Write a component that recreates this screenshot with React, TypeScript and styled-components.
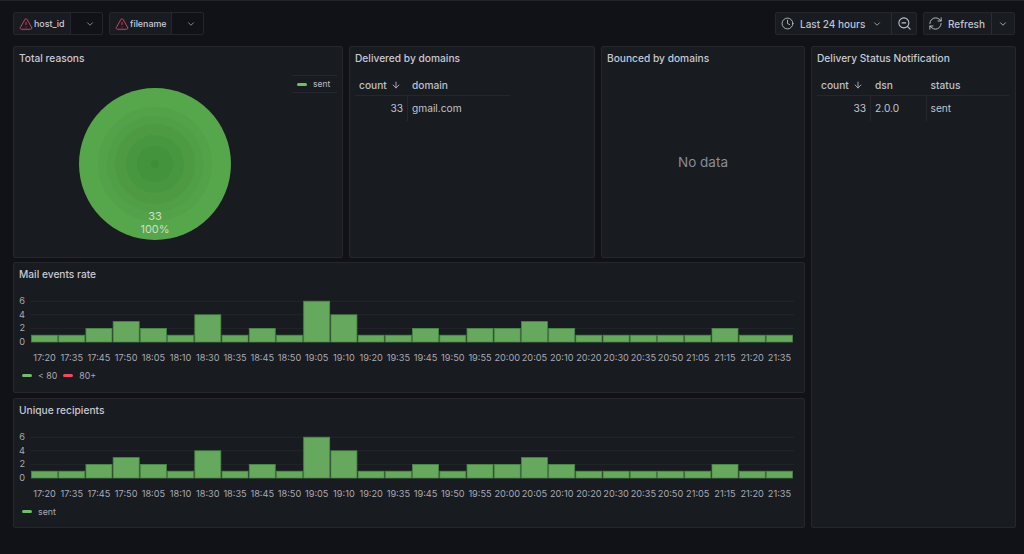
import React from 'react';
import styled, { createGlobalStyle } from 'styled-components';
import { ArrowDown, ChevronDown, Clock, RefreshCw, TriangleAlert, ZoomOut } from 'lucide-react';

const LABELS = ['17:20','17:35','17:45','17:50','18:05','18:10','18:30','18:35','18:45','18:50','19:05','19:10','19:20','19:35','19:45','19:50','19:55','20:00','20:05','20:10','20:20','20:30','20:35','20:50','21:05','21:15','21:20','21:35'];
const VALUES = [1,1,2,3,2,1,4,1,2,1,6,4,1,1,2,1,2,2,3,2,1,1,1,1,1,2,1,1];

const GlobalStyle = createGlobalStyle`
	html, body {
		margin: 0;
		padding: 0;
		background: #111217;
	}
	* {
		box-sizing: border-box;
	}
`;

const Page = styled.div`
	width: 1024px;
	height: 554px;
	overflow: hidden;
	padding: 12px 9px 0 13px;
	background: #111217;
	border-top: 1px solid #22242a;
	color: #ccccdc;
	font-family: Inter, "Noto Sans", sans-serif;
`;

const Toolbar = styled.div`
	display: flex;
	align-items: center;
	height: 23px;
	margin-top: -1px;
	gap: 6px;
`;

const Spacer = styled.div`
	flex: 1;
`;

const VarGroup = styled.div<{ $label: number; $total: number }>`
	display: grid;
	grid-template-columns: ${p => p.$label}px 1fr;
	width: ${p => p.$total}px;
	height: 23px;
	border: 1px solid #24262b;
	border-radius: 2px;
`;

const VarLabel = styled.div`
	display: flex;
	align-items: center;
	gap: 1px;
	padding-left: 5px;
	background: #181b1f;
	border-right: 1px solid #24262b;
	font-size: 8.9px;
	font-weight: 500;
	white-space: nowrap;
`;

const VarSelect = styled.div`
	display: flex;
	align-items: center;
	justify-content: center;
	padding-left: 6px;
	color: #9a9ca8;
`;

const ToolGroup = styled.div<{ $split: number; $total: number }>`
	display: grid;
	grid-template-columns: ${p => p.$split}px 1fr;
	width: ${p => p.$total}px;
	height: 23px;
	background: #181b1f;
	border: 1px solid #24262b;
	border-radius: 2px;
	font-size: 10px;
	font-weight: 500;
	color: #c2c3cf;
`;

const ToolMain = styled.div<{ $pad: number; $gap: number }>`
	display: flex;
	align-items: center;
	gap: ${p => p.$gap}px;
	padding-left: ${p => p.$pad}px;
	border-right: 1px solid #2b2d32;
	white-space: nowrap;
`;

const ToolEnd = styled.div`
	display: flex;
	align-items: center;
	justify-content: center;
`;

const PushRight = styled(ChevronDown)`
	margin-left: 1px;
	color: #b0b1bd;
`;

const Grid = styled.div`
	display: grid;
	grid-template-columns: 330px 246px 204px 205px;
	grid-template-rows: 211.5px 131px 130.5px;
	column-gap: 6px;
	row-gap: 4.5px;
	margin-top: 11px;
`;

const Panel = styled.section<{ $wide?: boolean; $tall?: boolean }>`
	grid-column: ${p => (p.$wide ? 'span 3' : 'auto')};
	grid-row: ${p => (p.$tall ? 'span 3' : 'auto')};
	display: flex;
	flex-direction: column;
	min-width: 0;
	background: #181b1f;
	border: 1px solid #25272c;
	border-radius: 2px;
`;

const PanelTitle = styled.h2`
	flex: none;
	height: 23px;
	margin: 0;
	padding: 0 5px;
	font-size: 10.2px;
	font-weight: 500;
	line-height: 23px;
	color: #c8c9d6;
`;

const PieBody = styled.div`
	flex: 1;
	display: flex;
	padding: 5px 5px 0 64px;
`;

const PieSvg = styled.svg`
	display: block;
	margin-top: 12px;
`;

const PieLegend = styled.div`
	display: flex;
	align-items: center;
	gap: 6px;
	height: 18px;
	width: 45px;
	margin-left: auto;
	padding-left: 5px;
	border-top: 1px solid #25272c;
	border-bottom: 1px solid #25272c;
	font-size: 8.5px;
	color: #b9bac6;
`;

const Swatch = styled.i<{ $color: string }>`
	display: block;
	width: 10px;
	height: 3px;
	border-radius: 2px;
	background: ${p => p.$color};
`;

const PieLabel = styled.text`
	font-size: 11px;
	fill: #d3dbd0;
	text-anchor: middle;
`;

const Table = styled.div<{ $cols: string; $width: number }>`
	display: grid;
	grid-template-columns: ${p => p.$cols};
	width: ${p => p.$width}px;
	margin: 5px 0 0 5px;
	font-size: 10.2px;
`;

const HeadCell = styled.div`
	display: flex;
	align-items: center;
	gap: 4px;
	height: 21px;
	padding: 0 4px;
	border-bottom: 1px solid #25272c;
	font-weight: 500;
	color: #bfc0cc;
`;

const Cell = styled.div<{ $end?: boolean; $divider?: boolean }>`
	height: 25px;
	line-height: 25px;
	padding: 0 4px;
	text-align: ${p => (p.$end ? 'right' : 'left')};
	border-right: ${p => (p.$divider ? '1px solid #25272c' : 'none')};
	color: #c2c3cf;
`;

const NoData = styled.div`
	flex: 1;
	display: flex;
	align-items: center;
	justify-content: center;
	padding-bottom: 2px;
	font-size: 13.5px;
	color: #8a8c96;
`;

const ChartSvg = styled.svg`
	display: block;
	flex: none;
`;

const AxisText = styled.text<{ $anchor: string }>`
	font-size: 9.2px;
	fill: #a9aab5;
	text-anchor: ${p => p.$anchor};
`;

const Legend = styled.div`
	display: flex;
	align-items: center;
	gap: 6px;
	padding-left: 8px;
	margin-top: 6px;
	font-size: 8.8px;
	color: #a9aab5;
`;

function Chart() {
	const base = 56;
	const unit = 6.8;
	const pitch = 27.22;
	const ticks = [0, 2, 4, 6];

	return (
		<ChartSvg width={790} height={78} viewBox="0 0 790 78">
			{ticks.map(t => (
				<g key={t}>
					<AxisText $anchor="end" x={11} y={base - t * unit + 3}>{t}</AxisText>
					{t > 0 && <line x1={16} x2={780} y1={base - t * unit} y2={base - t * unit} stroke="#24262b" />}
				</g>
			))}
			{VALUES.map((v, i) => (
				<g key={LABELS[i]}>
					<rect
						x={17.5 + i * pitch}
						y={base - v * unit}
						width={26}
						height={v * unit}
						fill="#66a85d"
						stroke="#4d8748"
						strokeWidth={0.8}
					/>
					<AxisText $anchor="middle" x={30.5 + i * pitch} y={base + 18.5}>{LABELS[i]}</AxisText>
				</g>
			))}
		</ChartSvg>
	);
}

function Pie() {
	const rings = [
		{ r: 76, fill: '#56a64b' },
		{ r: 57, fill: '#53a249' },
		{ r: 48, fill: '#509e46' },
		{ r: 40, fill: '#4d9a43' },
		{ r: 29, fill: '#479640' },
		{ r: 18, fill: '#43923c' },
		{ r: 4, fill: '#3f8d39' },
	];

	return (
		<PieSvg width={154} height={154} viewBox="0 0 154 154">
			{rings.map(ring => (
				<circle key={ring.r} cx={77} cy={77} r={ring.r} fill={ring.fill} />
			))}
			<PieLabel x={77} y={133}>33</PieLabel>
			<PieLabel x={77} y={146}>100%</PieLabel>
		</PieSvg>
	);
}

export default function App() {
	return (
		<Page>
			<GlobalStyle />

			<Toolbar>
				<VarGroup $label={57} $total={90}>
					<VarLabel><TriangleAlert size={14} color="#d8456b" strokeWidth={1.6} />host_id</VarLabel>
					<VarSelect><ChevronDown size={10} /></VarSelect>
				</VarGroup>
				<VarGroup $label={62} $total={95}>
					<VarLabel><TriangleAlert size={14} color="#d8456b" strokeWidth={1.6} />filename</VarLabel>
					<VarSelect><ChevronDown size={10} /></VarSelect>
				</VarGroup>
				<Spacer />
				<ToolGroup $split={116} $total={142}>
					<ToolMain $pad={5} $gap={6}>
						<Clock size={13} strokeWidth={1.6} />Last 24 hours<PushRight size={10} />
					</ToolMain>
					<ToolEnd><ZoomOut size={15} strokeWidth={1.7} /></ToolEnd>
				</ToolGroup>
				<ToolGroup $split={68} $total={92}>
					<ToolMain $pad={4} $gap={5}>
						<RefreshCw size={15} strokeWidth={1.5} />Refresh
					</ToolMain>
					<ToolEnd><ChevronDown size={10} /></ToolEnd>
				</ToolGroup>
			</Toolbar>

			<Grid>
				<Panel>
					<PanelTitle>Total reasons</PanelTitle>
					<PieBody>
						<Pie />
						<PieLegend><Swatch $color="#73bf69" />sent</PieLegend>
					</PieBody>
				</Panel>

				<Panel>
					<PanelTitle>Delivered by domains</PanelTitle>
					<Table $cols="53px 1fr" $width={155}>
						<HeadCell>count <ArrowDown size={10} /></HeadCell>
						<HeadCell>domain</HeadCell>
						<Cell $end $divider>33</Cell>
						<Cell>gmail.com</Cell>
					</Table>
				</Panel>

				<Panel>
					<PanelTitle>Bounced by domains</PanelTitle>
					<NoData>No data</NoData>
				</Panel>

				<Panel $tall>
					<PanelTitle>Delivery Status Notification</PanelTitle>
					<Table $cols="54px 55.5px 1fr" $width={192}>
						<HeadCell>count <ArrowDown size={10} /></HeadCell>
						<HeadCell>dsn</HeadCell>
						<HeadCell>status</HeadCell>
						<Cell $end $divider>33</Cell>
						<Cell $divider>2.0.0</Cell>
						<Cell>sent</Cell>
					</Table>
				</Panel>

				<Panel $wide>
					<PanelTitle>Mail events rate</PanelTitle>
					<Chart />
					<Legend>
						<Swatch $color="#73bf69" /><span>&lt; 80</span>
						<Swatch $color="#f2495c" /><span>80+</span>
					</Legend>
				</Panel>

				<Panel $wide>
					<PanelTitle>Unique recipients</PanelTitle>
					<Chart />
					<Legend>
						<Swatch $color="#73bf69" /><span>sent</span>
					</Legend>
				</Panel>
			</Grid>
		</Page>
	);
}
